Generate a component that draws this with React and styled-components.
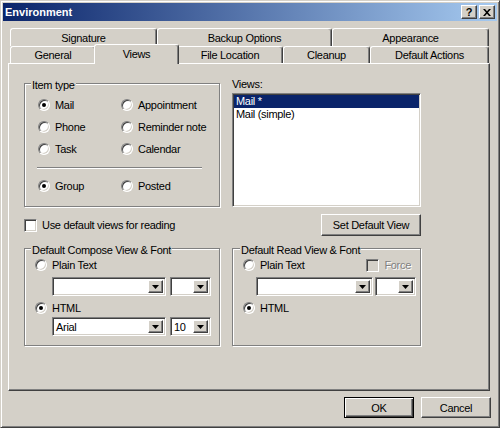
import React from 'react';
import styled, { createGlobalStyle, css } from 'styled-components';

const face = '#d4d0c8';
const shade = '#808080';
const dark = '#404040';

const GlobalStyle = createGlobalStyle`
  html, body { margin: 0; padding: 0; background: ${face}; }
  body {
    font-family: "Liberation Sans", Arial, sans-serif;
    font-size: 11px;
    letter-spacing: -0.3px;
    color: #000;
  }
  * { box-sizing: border-box; }
`;

const raised = css`
  background: ${face};
  border: 1px solid;
  border-color: #fff ${dark} ${dark} #fff;
  box-shadow: inset -1px -1px ${shade};
`;

const sunken = css`
  border: 1px solid;
  border-color: ${shade} #fff #fff ${shade};
  box-shadow: inset 1px 1px ${dark}, inset -1px -1px ${face};
`;

const Window = styled.div`
  width: 500px;
  height: 428px;
  background: ${face};
  border: 1px solid;
  border-color: ${face} ${dark} ${dark} ${face};
  box-shadow: inset 1px 1px #fff, inset -1px -1px ${shade};
  padding: 2px;
  display: flex;
  flex-direction: column;
`;

const TitleBar = styled.div`
  height: 18px;
  display: flex;
  align-items: center;
  justify-content: space-between;
  padding: 0 2px 0 2px;
  background: linear-gradient(to right, #0a246a, #a6caf0);
`;

const Title = styled.span`
  color: #fff;
  font-weight: bold;
  letter-spacing: 0;
`;

const TitleButtons = styled.div`
  display: flex;
  gap: 2px;
`;

const TitleButton = styled.div`
  ${raised};
  width: 16px;
  height: 14px;
  display: flex;
  align-items: center;
  justify-content: center;
  font-weight: bold;
  font-size: 11px;
  line-height: 1;
`;

const Body = styled.div`
  flex: 1;
  display: flex;
  flex-direction: column;
  padding: 7px 7px 0 5px;
`;

const TabRow = styled.div`
  display: flex;
  height: ${p => p.$h}px;
  padding-left: 2px;
`;

const Tab = styled.div`
  width: ${p => p.$w}px;
  display: flex;
  align-items: center;
  justify-content: center;
  background: ${face};
  border-top: 1px solid #fff;
  border-left: 1px solid #fff;
  border-right: 1px solid ${dark};
  box-shadow: inset -1px 0 ${shade};
  border-radius: 3px 3px 0 0;
  ${p => p.$active && css`
    width: ${p.$w + 4}px;
    margin: -2px -2px -1px;
    padding-bottom: 1px;
    position: relative;
    z-index: 1;
  `}
`;

const Panel = styled.div`
  height: 328px;
  display: flex;
  flex-direction: column;
  padding: 19px 0 0 15px;
  border: 1px solid;
  border-color: #fff ${dark} ${dark} #fff;
  box-shadow: inset -1px -1px ${shade};
`;

const Row = styled.div`
  display: flex;
  gap: 12px;
  margin-top: ${p => p.$mt || 0}px;
  height: ${p => p.$h}px;
  align-items: ${p => p.$center ? 'center' : 'flex-start'};
`;

const Column = styled.div`
  width: ${p => p.$w}px;
  display: flex;
  flex-direction: column;
  align-items: ${p => p.$end ? 'flex-end' : 'stretch'};
`;

const GroupBox = styled.div`
  width: ${p => p.$w}px;
  height: ${p => p.$h}px;
  border: 1px solid ${shade};
  box-shadow: inset 1px 1px #fff, 1px 1px #fff;
  display: flex;
  flex-direction: column;
  padding-left: ${p => p.$pl}px;
`;

const GroupLabel = styled.span`
  align-self: flex-start;
  margin: -5px 0 0 ${p => p.$ml}px;
  padding: 0 1px;
  line-height: 13px;
  background: ${face};
`;

const Caption = styled.span`
  line-height: 13px;
  margin-top: -5px;
`;

const OptionGrid = styled.div`
  display: grid;
  grid-template-columns: 83px auto;
  grid-auto-rows: 22px;
  margin-top: ${p => p.$mt}px;
`;

const Option = styled.label`
  display: flex;
  align-items: center;
  gap: 5px;
  height: ${p => p.$h || 22}px;
  color: ${p => p.$disabled ? shade : '#000'};
  text-shadow: ${p => p.$disabled ? '1px 1px #fff' : 'none'};
`;

const RadioDot = styled.span`
  width: 12px;
  height: 12px;
  flex: none;
  border-radius: 50%;
  background: #fff;
  border: 1px solid;
  border-color: ${shade} #fff #fff ${shade};
  box-shadow: inset 1px 1px ${dark}, inset -1px -1px ${face};
  display: flex;
  align-items: center;
  justify-content: center;
  &::after {
    content: '';
    width: 4px;
    height: 4px;
    border-radius: 50%;
    background: ${p => p.$on ? '#000' : 'transparent'};
  }
`;

const CheckBox = styled.span`
  width: 13px;
  height: 13px;
  flex: none;
  ${sunken};
  background: ${p => p.$disabled ? face : '#fff'};
`;

const Separator = styled.div`
  height: 2px;
  margin: 7px 17px 0 -1px;
  border-top: 1px solid ${shade};
  border-bottom: 1px solid #fff;
`;

const ListBox = styled.div`
  margin-top: 2px;
  height: 114px;
  background: #fff;
  padding: 1px;
  ${sunken};
`;

const ListItem = styled.div`
  height: 13px;
  line-height: 13px;
  padding-left: 2px;
  background: ${p => p.$selected ? '#0a246a' : 'transparent'};
  color: ${p => p.$selected ? '#fff' : '#000'};
`;

const Button = styled.div`
  ${raised};
  width: ${p => p.$w}px;
  height: ${p => p.$h || 21}px;
  display: flex;
  align-items: center;
  justify-content: center;
  ${p => p.$default && css`
    border: 1px solid #000;
    box-shadow: inset 1px 1px #fff, inset -1px -1px ${dark}, inset -2px -2px ${shade};
  `}
`;

const ComboRow = styled.div`
  display: flex;
  gap: ${p => p.$gap}px;
  margin: ${p => p.$mt}px 0 0 ${p => p.$indent}px;
`;

const Combo = styled.div`
  width: ${p => p.$w}px;
  height: 19px;
  display: flex;
  align-items: stretch;
  justify-content: space-between;
  background: #fff;
  padding: 2px;
  ${sunken};
`;

const ComboValue = styled.span`
  line-height: 15px;
  padding-left: 1px;
`;

const DropButton = styled.span`
  ${raised};
  width: 15px;
  display: flex;
  align-items: center;
  justify-content: center;
`;

const OptionLine = styled.div`
  display: flex;
  align-items: center;
  justify-content: space-between;
  padding-right: 9px;
`;

const Footer = styled.div`
  display: flex;
  justify-content: flex-end;
  gap: 7px;
  margin: 6px -1px 0 0;
`;

const Arrow = () => (
  <svg width="7" height="4" viewBox="0 0 7 4">
    <path d="M0 0h7L3.5 4z" fill="#000" />
  </svg>
);

const Close = () => (
  <svg width="8" height="7" viewBox="0 0 8 7">
    <path d="M0 0h2l2 2.3L6 0h2L5 3.5 8 7H6L4 4.7 2 7H0l3-3.5z" fill="#000" />
  </svg>
);

const Radio = ({ on, children, h }) => (
  <Option $h={h}>
    <RadioDot $on={on} />
    {children}
  </Option>
);

const Check = ({ disabled, children, h }) => (
  <Option $h={h} $disabled={disabled}>
    <CheckBox $disabled={disabled} />
    {children}
  </Option>
);

const ComboBox = ({ w, value }) => (
  <Combo $w={w}>
    <ComboValue>{value}</ComboValue>
    <DropButton><Arrow /></DropButton>
  </Combo>
);

const topTabs = [
  ['Signature', 147],
  ['Backup Options', 175],
  ['Appearance', 157],
];

const bottomTabs = [
  ['General', 86],
  ['Views', 81],
  ['File Location', 106],
  ['Cleanup', 87],
  ['Default Actions', 119],
];

export default function App() {
  return (
    <>
      <GlobalStyle />
      <Window>
        <TitleBar>
          <Title>Environment</Title>
          <TitleButtons>
            <TitleButton>?</TitleButton>
            <TitleButton><Close /></TitleButton>
          </TitleButtons>
        </TitleBar>
        <Body>
          <TabRow $h={18}>
            {topTabs.map(([t, w]) => <Tab key={t} $w={w}>{t}</Tab>)}
          </TabRow>
          <TabRow $h={17}>
            {bottomTabs.map(([t, w]) => (
              <Tab key={t} $w={w} $active={t === 'Views'}>{t}</Tab>
            ))}
          </TabRow>
          <Panel>
            <Row $h={124}>
              <GroupBox $w={196} $h={124} $pl={13}>
                <GroupLabel $ml={-7}>Item type</GroupLabel>
                <OptionGrid $mt={2}>
                  <Radio on>Mail</Radio>
                  <Radio>Appointment</Radio>
                  <Radio>Phone</Radio>
                  <Radio>Reminder note</Radio>
                  <Radio>Task</Radio>
                  <Radio>Calendar</Radio>
                </OptionGrid>
                <Separator />
                <OptionGrid $mt={6}>
                  <Radio on>Group</Radio>
                  <Radio>Posted</Radio>
                </OptionGrid>
              </GroupBox>
              <Column $w={189}>
                <Caption>Views:</Caption>
                <ListBox>
                  <ListItem $selected>Mail *</ListItem>
                  <ListItem>Mail (simple)</ListItem>
                </ListBox>
              </Column>
            </Row>
            <Row $mt={7} $h={22} $center>
              <Column $w={196}>
                <Check h={14}>Use default views for reading</Check>
              </Column>
              <Column $w={189} $end>
                <Button $w={100} $h={22}>Set Default View</Button>
              </Column>
            </Row>
            <Row $mt={12} $h={98}>
              <GroupBox $w={196} $h={98} $pl={10}>
                <GroupLabel $ml={-4}>Default Compose View &amp; Font</GroupLabel>
                <Radio h={16}>Plain Text</Radio>
                <ComboRow $gap={4} $mt={4} $indent={17}>
                  <ComboBox w={114} />
                  <ComboBox w={41} />
                </ComboRow>
                <div style={{ marginTop: 4 }}>
                  <Radio on h={16}>HTML</Radio>
                </div>
                <ComboRow $gap={4} $mt={1} $indent={17}>
                  <ComboBox w={114} value="Arial" />
                  <ComboBox w={41} value="10" />
                </ComboRow>
              </GroupBox>
              <GroupBox $w={189} $h={98} $pl={10}>
                <GroupLabel $ml={-3}>Default Read View &amp; Font</GroupLabel>
                <OptionLine>
                  <Radio h={16}>Plain Text</Radio>
                  <Check disabled h={16}>Force</Check>
                </OptionLine>
                <ComboRow $gap={2} $mt={4} $indent={13}>
                  <ComboBox w={117} />
                  <ComboBox w={41} />
                </ComboRow>
                <div style={{ marginTop: 4 }}>
                  <Radio on h={16}>HTML</Radio>
                </div>
              </GroupBox>
            </Row>
          </Panel>
          <Footer>
            <Button $w={70} $default>OK</Button>
            <Button $w={70}>Cancel</Button>
          </Footer>
        </Body>
      </Window>
    </>
  );
}
